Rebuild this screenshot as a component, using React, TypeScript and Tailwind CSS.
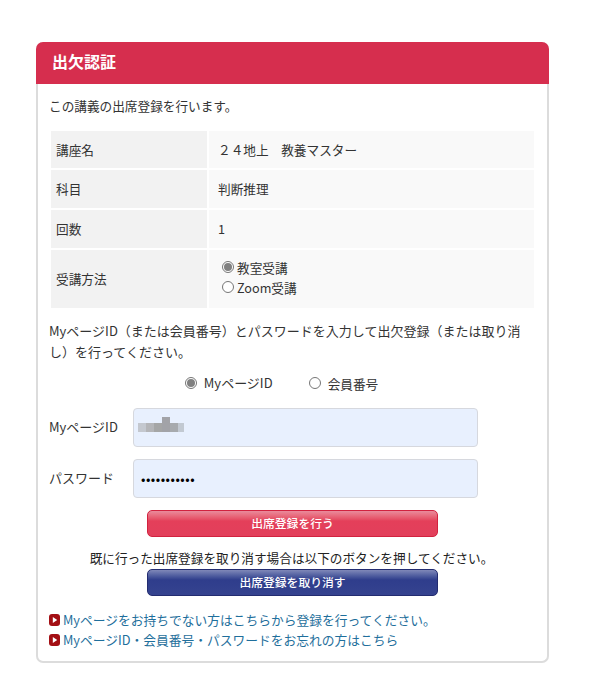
import { ReactNode } from 'react';

const font = { fontFamily: '"Noto Sans CJK JP", "Liberation Sans", sans-serif' };

const Radio = ({ checked, className = '' }: { checked?: boolean; className?: string }) => (
  <span className={`inline-flex w-[12px] h-[12px] shrink-0 items-center justify-center rounded-full border border-[#767676] bg-white ${className}`}>
    {checked && <span className="w-[8px] h-[8px] rounded-full bg-[#808080]" />}
  </span>
);

const Row = ({ label, height, children }: { label: string; height: string; children: ReactNode }) => (
  <div className={`grid grid-cols-[156px_325px] gap-x-[2px] ${height}`}>
    <div className="bg-[#f2f2f2] flex items-center pl-[5px] pb-[1px]">{label}</div>
    <div className="bg-[#f9f9f9] flex items-center pl-[9px] pb-[1px]">{children}</div>
  </div>
);

const LinkLine = ({ children }: { children: ReactNode }) => (
  <div className="flex items-center h-5 text-[#1f6f9c] text-[12.75px]">
    <svg width="11" height="12" viewBox="0 0 11 12" className="mr-[3px] shrink-0">
      <rect width="11" height="12" rx="3" fill="#a30f14" />
      <path d="M3.8 3 L8.2 6 L3.8 9 Z" fill="#fff" />
    </svg>
    {children}
  </div>
);

export default function App() {
  return (
    <div className="w-[600px] h-[696px] bg-white pt-[42px] pl-[36px] text-[12.65px] text-[#333]" style={font}>
      <div className="w-[513px] h-[621px] rounded-[7px] border-2 border-t-0 border-[#dcdcdc] bg-white relative">
        <div className="-mx-[2px] h-[42px] rounded-t-[7px] bg-[#d62e4e] flex items-center pl-4 pb-[5px] text-white text-[16px] font-bold">
          出欠認証
        </div>

        <div className="px-[11px]">
          <p className="h-[47px] pt-[12px] leading-[20px]">この講義の出席登録を行います。</p>

          <div className="ml-[2px] flex flex-col gap-y-[2px]">
            <Row label="講座名" height="h-[37px]">
              <span>２４地上　教養マスター</span>
            </Row>
            <Row label="科目" height="h-[38px]">判断推理</Row>
            <Row label="回数" height="h-[38px]">1</Row>
            <Row label="受講方法" height="h-[58px]">
              <div className="flex flex-col gap-y-[1px] pl-[4px] pb-[3px] leading-[19px]">
                <label className="flex items-center gap-[3px]"><Radio checked />教室受講</label>
                <label className="flex items-center gap-[3px]"><Radio />Zoom受講</label>
              </div>
            </Row>
          </div>

          <p className="mt-[12px] leading-[21px] w-[484px] text-[13px]">
            MyページID（または会員番号）とパスワードを入力して出欠登録（または取り消し）を行ってください。
          </p>

          <div className="mt-[11px] h-[20px] flex items-center justify-center pr-[22px]">
            <Radio checked className="mr-[7px]" />
            <span className="mr-[36px] text-[13px]">MyページID</span>
            <Radio className="mr-[7px]" />
            <span>会員番号</span>
          </div>

          <div className="mt-[15px] flex items-center h-[39px]">
            <span className="w-[84px] pb-[2px] text-[13px]">MyページID</span>
            <div className="w-[345px] h-full rounded-[4px] border-[1.5px] border-[#d6d8de] bg-[#e8f0fe] flex items-center pl-[4px]">
              <div className="flex items-center blur-[0.6px]">
                <span className="w-[8px] h-[9px] bg-[#c4c8cf]" />
                <span className="w-[8px] h-[9px] bg-[#b4b5b8]" />
                <span className="w-[8px] h-[9px] bg-[#a5a6a6]" />
                <span className="w-[8px] h-[15px] mb-[6px] bg-[#a2a3a8]" />
                <span className="w-[8px] h-[9px] bg-[#a7aaae]" />
                <span className="w-[6px] h-[9px] bg-[#c2c9d2]" />
              </div>
            </div>
          </div>
          <div className="mt-[12px] flex items-center h-[39px]">
            <span className="w-[84px] pb-[2px] text-[13px]">パスワード</span>
            <div className="w-[345px] h-full rounded-[4px] border-[1.5px] border-[#d6d8de] bg-[#e8f0fe] flex items-center pl-[7px] text-black text-[13px] tracking-[0.5px]">
              •••••••••••
            </div>
          </div>

          <button className="block mt-[12px] ml-[98px] w-[291px] h-[27px] pb-[1px] rounded-[5px] border border-[#d1223f] bg-linear-to-b from-[#e98a9b] via-[#e43f5a] via-40% to-[#e23f5b] text-white text-[11.8px] font-medium">
            出席登録を行う
          </button>

          <p className="mt-[12px] h-[20px] leading-[18px] text-center w-[485px] text-[#222]">
            既に行った出席登録を取り消す場合は以下のボタンを押してください。
          </p>

          <button className="block ml-[98px] w-[291px] h-[27px] pb-[1px] rounded-[5px] border border-[#232c70] bg-linear-to-b from-[#8088b8] via-[#2f3d8c] via-40% to-[#35438f] text-white text-[11.8px] font-medium">
            出席登録を取り消す
          </button>

          <div className="mt-[14px]">
            <LinkLine>Myページをお持ちでない方はこちらから登録を行ってください。</LinkLine>
            <LinkLine>MyページID・会員番号・パスワードをお忘れの方はこちら</LinkLine>
          </div>
        </div>
      </div>
    </div>
  );
}
